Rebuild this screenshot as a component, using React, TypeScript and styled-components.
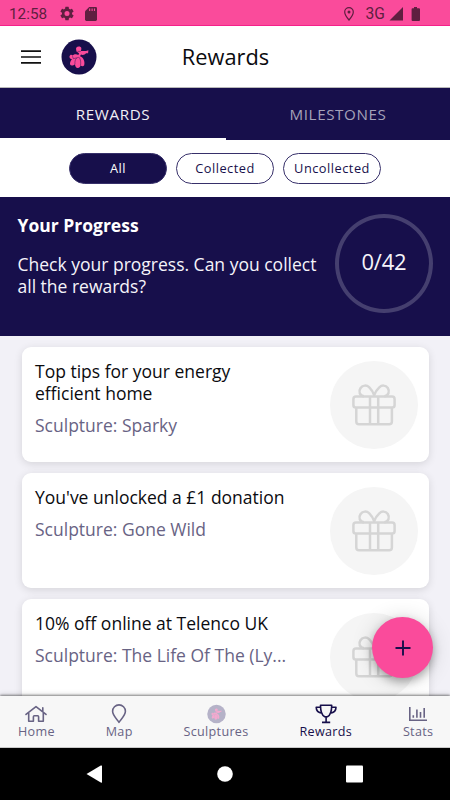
import React from "react";
import styled, { createGlobalStyle } from "styled-components";

const navy = "#170f4b";
const pink = "#fa4b9b";
const muted = "#686384";
const statusInk = "#5f1f40";

const GlobalStyle = createGlobalStyle`
  * { box-sizing: border-box; }
  body { margin: 0; background: #000; }
`;

const Screen = styled.div`
  width: 450px;
  height: 800px;
  display: flex;
  flex-direction: column;
  position: relative;
  overflow: hidden;
  background: #fff;
  font-family: "Open Sans", sans-serif;
  color: #0b0b0f;
`;

const StatusBar = styled.div`
  flex: 0 0 26px;
  display: flex;
  align-items: center;
  background: ${pink};
  border-bottom: 1px solid #f5208a;
  padding: 2px 30px 0 9px;
  font-family: Roboto, sans-serif;
  font-size: 15.3px;
  color: ${statusInk};
  svg { display: block; flex: none; }
`;

const Clock = styled.span`
  width: 51px;
  white-space: nowrap;
`;

const StatusIcons = styled.div`
  display: flex;
  align-items: center;
  gap: 11px;
`;

const StatusRight = styled.div`
  display: flex;
  align-items: center;
  margin-left: auto;
`;

const Network = styled.span`
  font-size: 15.6px;
  margin: 0 4px 0 12px;
`;

const Header = styled.header`
  flex: 0 0 62px;
  display: grid;
  grid-template-columns: 1fr auto 1fr;
  align-items: center;
  border-bottom: 1px solid #b9b9b9;
  padding: 0 20px 0 21px;
`;

const HeaderActions = styled.div`
  display: flex;
  align-items: center;
  gap: 20px;
  svg { display: block; }
`;

const HeaderTitle = styled.h1`
  margin: 1px 0 0;
  font-size: 21.8px;
  font-weight: 400;
  line-height: 30px;
`;

const Tabs = styled.nav`
  flex: 0 0 52px;
  display: grid;
  grid-template-columns: 226px 224px;
  background: ${navy};
`;

const Tab = styled.div<{ $active?: boolean }>`
  display: flex;
  align-items: center;
  justify-content: center;
  padding-top: 1px;
  font-size: 15.2px;
  letter-spacing: 0.6px;
  color: ${(p) => (p.$active ? "#f1f0f6" : "#a5a2b9")};
  border-bottom: 2px solid ${(p) => (p.$active ? "#fff" : navy)};
`;

const Filters = styled.div`
  flex: 0 0 57px;
  display: flex;
  justify-content: center;
  align-items: center;
  gap: 9px;
`;

const Chip = styled.button<{ $active?: boolean }>`
  width: 98px;
  height: 31px;
  padding: 0 0 2px;
  border: 1px solid #37306a;
  border-radius: 16px;
  background: ${(p) => (p.$active ? navy : "#fff")};
  color: ${(p) => (p.$active ? "#fff" : navy)};
  font: 400 12.8px/20px "Open Sans", sans-serif;
  letter-spacing: 0.5px;
`;

const Progress = styled.section`
  flex: 0 0 139px;
  display: flex;
  justify-content: space-between;
  padding: 17px 17px 0 17.5px;
  background: ${navy};
  color: #f5f4fa;
`;

const ProgressHeading = styled.h2`
  margin: 0 0 17px;
  font-size: 17.5px;
  line-height: 22px;
  font-weight: 700;
  color: #fff;
`;

const ProgressText = styled.p`
  margin: 0;
  font-size: 17.5px;
  line-height: 22px;
  white-space: nowrap;
`;

const Ring = styled.div`
  width: 98px;
  height: 99px;
  display: flex;
  align-items: center;
  justify-content: center;
  border: 4px solid #453f6f;
  border-radius: 50%;
  font-size: 22px;
  padding-bottom: 6px;
  letter-spacing: -0.2px;
`;

const List = styled.main`
  flex: 1;
  min-height: 0;
  overflow: hidden;
  display: flex;
  flex-direction: column;
  gap: 11px;
  padding: 11px 21px 0 22px;
  background: #f2f1f7;
`;

const Card = styled.article`
  flex: 0 0 115px;
  display: flex;
  justify-content: space-between;
  padding: 13px 11px 0 13px;
  border-radius: 9px;
  background: #fff;
  box-shadow: 0 2px 9px rgba(0, 0, 0, 0.12);
`;

const CardTitle = styled.h3`
  margin: 0 0 10px;
  font-size: 17.5px;
  font-weight: 400;
  line-height: 22px;
  white-space: pre-line;
`;

const CardSubtitle = styled.div`
  font-size: 17.5px;
  font-weight: 400;
  line-height: 22px;
  color: ${muted};
`;

const GiftCircle = styled.div`
  width: 88px;
  height: 88px;
  margin-top: 1px;
  border-radius: 50%;
  display: flex;
  align-items: center;
  justify-content: center;
  background: #f5f5f5;
`;

const Fab = styled.button`
  position: absolute;
  right: 17px;
  bottom: 122px;
  width: 61px;
  height: 61px;
  padding: 0;
  border: 0;
  border-radius: 50%;
  display: flex;
  align-items: center;
  justify-content: center;
  background: ${pink};
  box-shadow: 0 4px 8px rgba(0, 0, 0, 0.28), 0 2px 22px rgba(0, 0, 0, 0.16);
`;

const BottomBar = styled.nav`
  flex: 0 0 52px;
  position: relative;
  display: flex;
  justify-content: space-between;
  padding: 7px 17px 0 18px;
  background: #f7f7f7;
  border-bottom: 1px solid #c9c9c9;
  box-shadow: 0 -1px 2px rgba(0, 0, 0, 0.42), 0 -2px 5px rgba(0, 0, 0, 0.12);
`;

const BottomItem = styled.div<{ $active?: boolean }>`
  display: flex;
  flex-direction: column;
  align-items: center;
  color: ${(p) => (p.$active ? navy : muted)};
  font-size: 12.6px;
  line-height: 17px;
  letter-spacing: 0.3px;
  margin-right: -0.3px;
  svg { display: block; height: 22px; margin-bottom: -2px; }
`;

const SystemNav = styled.div`
  flex: 0 0 52px;
  display: flex;
  align-items: center;
  justify-content: center;
  background: #000;
  svg { margin-right: 1px; }
`;

function Dog({ size, faded }: { size: number; faded?: boolean }) {
  const back = faded ? "#b5b2c8" : navy;
  return (
    <svg width={size} height={faded ? 22 : size} viewBox="0 0 36 36">
      <circle cx="18" cy="18" r="17.5" fill={back} />
      <g fill={faded ? "#f3a9cf" : pink}>
        <path d="M15.3 11.5C14.4 8.9 15.8 7.4 18 7.5 20.5 7.6 20.8 9.5 19.9 11.9L25 12.1 27.4 11.2 27.1 14.3 25 14.3C23.8 16 21.6 16.2 20 15.6L19 17.2C22.4 18.2 24.2 22.5 23.2 26.2 22.3 27.7 20.6 27.3 19.5 26.2 19.2 28.1 18.2 29 16.7 28.9 15 28.8 14.2 27.4 14 25.2 12.4 26.7 9.8 27 9.1 25.5 8.6 24 9.6 21.7 11.2 20.1 9.4 20.4 8.2 19 8.5 17.3 9 15.4 10.8 15.2 11.6 16.6 13.1 15 15.6 15.1 17.4 15.9L18 14.3 15.5 12.6Z" />
      </g>
      <path d="M11.5 17.2 12.3 19.7 17.8 18.3M15.7 19C14 20.7 13.7 23 14 25.2M18.2 18.3C19.7 20.6 20 23.5 19.5 26.2M16.5 12.4H19.8" fill="none" stroke={back} strokeWidth="0.45" />
    </svg>
  );
}

function Gift() {
  return (
    <svg width="44" height="42" viewBox="0 0 44 42" fill="none" stroke="#d5d5d5" strokeWidth="2.5" strokeLinejoin="round">
      <path d="M4.3 24V37.4Q4.3 40.2 7.1 40.2H37.1Q39.9 40.2 39.9 37.4V24" />
      <rect x="1.4" y="12.6" width="41.2" height="11" rx="2.6" />
      <path d="M18 12.4V40.4M26.2 12.4V40.4" />
      <path d="M12 12.2C7.6 12 6.2 7.3 8.6 4 10.8.9 14.8 1 17.3 3.3 19.6 5.5 21 7.8 22.1 11.2 23.4 7.8 25 5.4 27.3 3.3 29.8 1 33.6.9 35.8 4 38 7.4 36.5 12 32.3 12.2" />
    </svg>
  );
}

const rewards = [
  { title: "Top tips for your energy\nefficient home", place: "Sculpture: Sparky" },
  { title: "You've unlocked a £1 donation", place: "Sculpture: Gone Wild" },
  { title: "10% off online at Telenco UK", place: "Sculpture: The Life Of The (Ly..." },
];

export default function App() {
  return (
    <Screen>
      <GlobalStyle />
      <StatusBar>
        <Clock>12:58</Clock>
        <StatusIcons>
          <svg width="14" height="15" viewBox="2 2 20 20" fill={statusInk}>
            <path d="M19.14 12.94c.04-.3.06-.61.06-.94s-.02-.64-.07-.94l2.03-1.58a.5.5 0 0 0 .12-.61l-1.92-3.32a.5.5 0 0 0-.59-.22l-2.39.96a7 7 0 0 0-1.62-.94l-.36-2.54a.5.5 0 0 0-.48-.41h-3.84a.5.5 0 0 0-.47.41l-.36 2.54c-.59.24-1.13.57-1.62.94l-2.39-.96a.5.5 0 0 0-.59.22L2.74 8.87a.5.5 0 0 0 .12.61l2.03 1.58a7 7 0 0 0 0 1.88l-2.03 1.58a.5.5 0 0 0-.12.61l1.92 3.32c.12.22.37.29.59.22l2.39-.96c.5.38 1.03.7 1.62.94l.36 2.54c.05.24.24.41.48.41h3.84c.24 0 .44-.17.47-.41l.36-2.54a7 7 0 0 0 1.62-.94l2.39.96c.22.08.47 0 .59-.22l1.92-3.32a.5.5 0 0 0-.12-.61zM12 15.6a3.6 3.6 0 1 1 0-7.2 3.6 3.6 0 0 1 0 7.2z" />
          </svg>
          <svg width="12" height="14" viewBox="0 0 12 14">
            <path d="M4.2 0H10.8Q12 0 12 1.2V12.6Q12 14 10.6 14H1.4Q0 14 0 12.6V4.2Z" fill={statusInk} />
            <path d="M4.7 1.5V4M7.1 1.5V4M9.5 1.5V4" stroke={pink} strokeWidth="1.1" />
          </svg>
        </StatusIcons>
        <StatusRight>
          <svg width="10" height="14" viewBox="0 0 10 14" fill="none" stroke={statusInk} strokeWidth="1.2">
            <path d="M5 13C2.7 10.2.7 7.5.7 4.9a4.3 4.3 0 0 1 8.6 0C9.3 7.5 7.3 10.2 5 13Z" />
            <circle cx="5" cy="4.9" r="1.5" fill={statusInk} stroke="none" />
          </svg>
          <Network>3G</Network>
          <svg width="14" height="14" viewBox="0 0 14 14"><path d="M14 0V13.5H.5Z" fill={statusInk} /></svg>
          <svg width="17" height="14" viewBox="0 0 17 14"><path d="M11 0H14V1.3H16Q17 1.3 17 2.2V13Q17 14 16 14H9.6Q8.6 14 8.6 13V2.2Q8.6 1.3 9.6 1.3H11Z" fill={statusInk} /></svg>
        </StatusRight>
      </StatusBar>

      <Header>
        <HeaderActions>
          <svg width="20" height="14" viewBox="0 0 20 14" stroke="#111" strokeWidth="1.7">
            <path d="M0 1.2H20M0 7H20M0 12.8H20" />
          </svg>
          <Dog size={36} />
        </HeaderActions>
        <HeaderTitle>Rewards</HeaderTitle>
      </Header>

      <Tabs>
        <Tab $active>REWARDS</Tab>
        <Tab>MILESTONES</Tab>
      </Tabs>

      <Filters>
        <Chip $active>All</Chip>
        <Chip>Collected</Chip>
        <Chip>Uncollected</Chip>
      </Filters>

      <Progress>
        <div>
          <ProgressHeading>Your Progress</ProgressHeading>
          <ProgressText>
            Check your progress. Can you collect
            <br />
            all the rewards?
          </ProgressText>
        </div>
        <Ring>0/42</Ring>
      </Progress>

      <List>
        {rewards.map((r) => (
          <Card key={r.title}>
            <div>
              <CardTitle>{r.title}</CardTitle>
              <CardSubtitle>{r.place}</CardSubtitle>
            </div>
            <GiftCircle>
              <Gift />
            </GiftCircle>
          </Card>
        ))}
      </List>

      <Fab aria-label="Add">
        <svg width="16" height="16" viewBox="0 0 16 16" stroke={navy} strokeWidth="1.9">
          <path d="M8 .5V15.5M.5 8H15.5" />
        </svg>
      </Fab>

      <BottomBar>
        <BottomItem>
          <svg width="22" viewBox="0 0 22 22" fill="none" stroke={muted} strokeWidth="1.6" strokeLinejoin="round" strokeLinecap="round">
            <path d="M1 11.4 11 3.6 21 11.4M17.8 8.6V4.8M3.7 10V18.3H8.4V13.7Q8.4 12.8 9.3 12.8H12.7Q13.6 12.8 13.6 13.7V18.3H18.3V10" />
          </svg>
          Home
        </BottomItem>
        <BottomItem>
          <svg width="16" viewBox="0 0 16 22" fill="none" stroke={muted} strokeWidth="1.6" strokeLinejoin="round">
            <path d="M8 19.3C5.6 15.8 1.6 12.3 1.6 8.3a6.4 6.4 0 0 1 12.8 0C14.4 12.3 10.4 15.8 8 19.3Z" />
          </svg>
          Map
        </BottomItem>
        <BottomItem>
          <Dog size={19} faded />
          Sculptures
        </BottomItem>
        <BottomItem $active>
          <svg width="22" viewBox="0 0 22 22" fill="none" stroke={navy} strokeWidth="1.6" strokeLinejoin="round">
            <path d="M5.5 2.2H16.7C16.7 8.2 15.4 12.3 12.4 13.8H9.8C6.8 12.3 5.5 8.2 5.5 2.2ZM5.6 4.3H1.2C1.2 8.1 3.7 9.8 7 10.1M16.6 4.3H21C21 8.1 18.5 9.8 15.2 10.1M11.1 13.8V19.3M7 19.4H15.2" />
          </svg>
          Rewards
        </BottomItem>
        <BottomItem>
          <svg width="18" viewBox="0 0 18 22" fill="none" stroke={muted} strokeWidth="1.6">
            <path d="M.8 4V17.2H18M4.3 12.3V14.8M7.9 6.5V14.8M11.5 9V14.8M15.2 5V14.8" />
          </svg>
          Stats
        </BottomItem>
      </BottomBar>

      <SystemNav>
        <svg width="278" height="20" viewBox="0 0 278 20" fill="#fff">
          <path d="M.5 10 14.8 1.6Q16 1 16 2V18Q16 19 14.8 18.4Z" />
          <circle cx="139" cy="10" r="7.8" />
          <rect x="260" y="1.5" width="17" height="17" rx="1" />
        </svg>
      </SystemNav>
    </Screen>
  );
}
